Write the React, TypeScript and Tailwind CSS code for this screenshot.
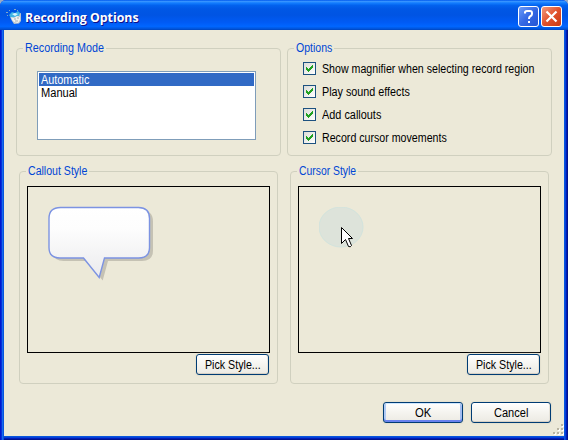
import React, { useLayoutEffect, useRef, useState } from "react";

function Label({ text, width, className = "" }: { text: string; width: number; className?: string }) {
  const ref = useRef<HTMLSpanElement>(null);
  const [scale, setScale] = useState(1);
  useLayoutEffect(() => {
    if (ref.current) setScale(width / ref.current.offsetWidth);
  }, [text, width]);
  return (
    <span className={"block shrink-0 whitespace-nowrap leading-[14px] " + className} style={{ width }}>
      <span ref={ref} className="inline-block origin-left" style={{ transform: `scaleX(${scale})` }}>
        {text}
      </span>
    </span>
  );
}

function Group({ title, width, className, children }: { title: string; width: number; className: string; children: React.ReactNode }) {
  return (
    <section className={"relative shrink-0 rounded-[4px] border border-[#d0d0bf] " + className}>
      <div className="absolute -top-[8px] left-[6px] bg-[#ece9d8] px-[2px] text-[#0046d5]">
        <Label text={title} width={width} />
      </div>
      {children}
    </section>
  );
}

function Check({ text, width }: { text: string; width: number }) {
  return (
    <label className="flex h-[23px] items-start">
      <span className="mr-[6px] flex h-[13px] w-[13px] shrink-0 border border-[#1c5180] bg-linear-to-br from-[#dcdcd7] to-white">
        <svg width="11" height="11" shapeRendering="crispEdges">
          <path d="M2 4h1v1h1v1h1v-1h1v-1h1v-1h1v-1h1v3h-1v1h-1v1h-1v1h-1v1h-1v-1h-1v-1h-1z" fill="#21a121" />
        </svg>
      </span>
      <Label text={text} width={width} />
    </label>
  );
}

function Button({ text, width, className, primary = false }: { text: string; width: number; className: string; primary?: boolean }) {
  return (
    <button
      className={
        "flex h-[21px] shrink-0 items-center justify-center rounded-[3px] border border-[#003c74] bg-linear-to-b from-white via-[#f5f4ef] to-[#eceae3] " +
        (primary
          ? "shadow-[inset_0_1px_#cee7ff,inset_0_-2px_#6982ee,inset_2px_0_#b0caf4,inset_-2px_0_#a3bdf0,0_0_1px_1px_#e4e0d0] "
          : "shadow-[inset_0_-1px_#d6d0c5,inset_-1px_0_#e6e3da,0_0_1px_1px_#e4e0d0] ") +
        className
      }
    >
      <Label text={text} width={width} />
    </button>
  );
}

function AppIcon() {
  return (
    <svg className="mr-[3px] shrink-0" width="16" height="16" viewBox="0 0 16 16">
      <path d="M4 8l4-2 7-2v8l-2 2.500-5 .5-2-3z" fill="#b9c4cd" />
      <path d="M3 6l3-3 3 1 3-2 2 2-1 3-5 1-3 1z" fill="#3fb4e4" />
      <path d="M6 5l3-1 3 1-3 2z" fill="#d5f6ff" />
      <path d="M5 8l3 1 3-2 3 1v3l-2 3-4-1-2-2z" fill="#eff1ef" />
      <path d="M8 10h2M11 9h2M9 12h3" stroke="#a3abb2" />
      <path d="M0 3h2v1H0zM3 1h1v1H3zM8 0h2v1H8zM11 1h1v1h-1zM1 6h1v1H1z" fill="#7fa6c8" />
    </svg>
  );
}

function Callout() {
  const d = "M12.500 1.500H90.500Q101.500 1.500 101.500 12.500V41.500Q101.500 52 90.500 52H56.500L51.200 71.500L35.500 52H12Q1 52 1 41.500V12.500Q1 1.500 12.500 1.500Z";
  return (
    <svg width="108" height="78">
      <defs>
        <linearGradient id="bubble" x2="0" y2="1">
          <stop stopColor="#fff" />
          <stop offset=".3" stopColor="#fdfdfd" />
          <stop offset="1" stopColor="#ebebed" />
        </linearGradient>
      </defs>
      <path d={d} transform="translate(3.500 3)" fill="#c5c2b4" />
      <path d={d} fill="url(#bubble)" stroke="#7c93e2" strokeWidth="1.400" />
    </svg>
  );
}

function Cursor() {
  return (
    <svg width="46" height="44">
      <ellipse cx="22" cy="20" rx="22" ry="20" fill="#dde3da" stroke="#d2e3dd" />
      <path
        d="M22.500 20.500V36.500L26.500 32.500L29.500 39.500Q31.500 40.500 32.500 38.500L29.500 31.500H33.500Z"
        fill="#fff"
        stroke="#000"
      />
    </svg>
  );
}

export default function App() {
  return (
    <div className="h-[440px] w-[568px] overflow-hidden bg-[#9aabc4] font-['Liberation_Sans',sans-serif] text-[12px] text-black">
      <main className="flex h-[440px] w-[568px] flex-col overflow-hidden rounded-t-[6px] bg-[#0831d9]">
        <header className="flex h-[30px] shrink-0 items-center bg-[linear-gradient(180deg,#0058ee_0%,#3593ff_5%,#127dff_10%,#0262ee_18%,#0057e5_30%,#0054e3_50%,#005bf5_75%,#0066ff_88%,#0052d6_97%,#0042b8_100%)] pt-[3px] pr-[6px] pl-[6px]">
          <AppIcon />
          <Label text="Recording Options" width={114} className="font-['Open_Sans',sans-serif] text-[13px] font-bold text-white [text-shadow:1px_1px_#0f1089]" />
          <div className="ml-auto flex gap-[2px]">
            <button className="flex h-[21px] w-[21px] items-center justify-center rounded-[3px] border border-white bg-linear-to-br from-[#6b9af7] via-[#3568e4] to-[#2455d4]">
              <svg width="19" height="19" fill="none" stroke="white" strokeWidth="2">
                <path d="M6 6.500V5.500Q6 4 8 4h3Q13 4 13 6v1Q13 8.500 11 9.500Q10 10 10 12M10 14v2" />
              </svg>
            </button>
            <button className="flex h-[21px] w-[21px] items-center justify-center rounded-[3px] border border-white bg-linear-to-br from-[#ee987d] via-[#e1512b] to-[#c93a10]">
              <svg width="19" height="19" stroke="white" strokeWidth="2.200">
                <path d="M4.500 4.500l10 10M14.500 4.500l-10 10" />
              </svg>
            </button>
          </div>
        </header>
        <div className="flex min-h-0 flex-1">
          <div className="w-[4px] shrink-0 bg-[linear-gradient(90deg,#0019cf_0_1px,#0831d9_1px_2px,#166aee_2px_3px,#0855dd_3px_4px)]" />
          <div className="flex min-w-0 flex-1 flex-col">
            <div className="flex h-[406px] shrink-0 flex-col bg-[#ece9d8] pt-[18px]">
              <div className="flex gap-[6px] pl-[12px]">
                <Group title="Recording Mode" width={79} className="h-[108px] w-[265px] pt-[22px] pl-[20px]">
                  <div className="h-[69px] w-[219px] border border-[#7f9db9] bg-white p-px">
                    <div className="h-[13px] bg-[#316ac5] pl-[2px] text-white">
                      <Label text="Automatic" width={48} />
                    </div>
                    <div className="h-[13px] pl-[2px]">
                      <Label text="Manual" width={36} />
                    </div>
                  </div>
                </Group>
                <Group title="Options" width={36} className="h-[108px] w-[265px] pt-[13px] pl-[15px]">
                  <Check text="Show magnifier when selecting record region" width={212} />
                  <Check text="Play sound effects" width={88} />
                  <Check text="Add callouts" width={59} />
                  <Check text="Record cursor movements" width={125} />
                </Group>
              </div>
              <div className="mt-[15px] flex gap-[12px] pl-[15px]">
                <Group title="Callout Style" width={59} className="h-[213px] w-[259px] pt-[14px] pl-[7px]">
                  <div className="h-[167px] w-[243px] border border-black pt-[19px] pl-[20px]">
                    <Callout />
                  </div>
                  <Button text="Pick Style..." width={56} className="mt-px ml-[169px] w-[73px]" />
                </Group>
                <Group title="Cursor Style" width={57} className="h-[213px] w-[259px] pt-[14px] pl-[7px]">
                  <div className="h-[167px] w-[243px] border border-black pt-[20px] pl-[20px]">
                    <Cursor />
                  </div>
                  <Button text="Pick Style..." width={56} className="mt-px ml-[169px] w-[73px]" />
                </Group>
              </div>
              <div className="mt-[18px] flex h-[34px] justify-end gap-[8px]">
                <Button text="OK" width={16} primary className="w-[80px]" />
                <Button text="Cancel" width={34} className="w-[80px]" />
                <svg className="mt-[22px] ml-[-6px] shrink-0" width="11" height="11" shapeRendering="crispEdges">
                  <path d="M9 1h2v2H9zM5 5h2v2H5zM9 5h2v2H9zM1 9h2v2H1zM5 9h2v2H5zM9 9h2v2H9z" fill="#fff" />
                  <path d="M8 0h2v2H8zM4 4h2v2H4zM8 4h2v2H8zM0 8h2v2H0zM4 8h2v2H4zM8 8h2v2H8z" fill="#b8b4a2" />
                </svg>
              </div>
            </div>
            <div className="h-[4px] bg-[linear-gradient(180deg,#0855dd_0_1px,#0441d8_1px_2px,#001dba_2px_3px,#00138c_3px_4px)]" />
          </div>
          <div className="w-[4px] shrink-0 bg-[linear-gradient(90deg,#0855dd_0_1px,#0441d8_1px_2px,#001dba_2px_3px,#00138c_3px_4px)]" />
        </div>
      </main>
    </div>
  );
}
